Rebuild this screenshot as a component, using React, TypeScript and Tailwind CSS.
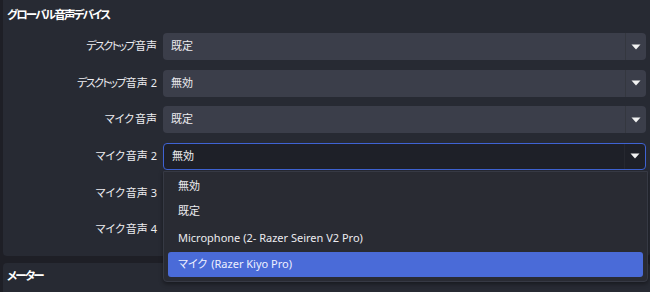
const font = {
  fontFamily: '"Noto Sans", "Noto Sans CJK JP", sans-serif',
};

function Arrow() {
  return (
    <svg width="10" height="6" viewBox="0 0 10 6" className="shrink-0">
      <path d="M0.5 0.5 H9.5 L5 5.5 Z" fill="#f2f2f2" />
    </svg>
  );
}

function Combo({ value, focused }: { value: string; focused?: boolean }) {
  return (
    <div
      className={`flex h-[27px] flex-1 items-center rounded-[4px] ${
        focused ? "border border-[#3f63d4] bg-[#1e2028]" : "bg-[#3b3e4a]"
      }`}
    >
      <span className="flex-1 pl-[8px] text-[#ececf0]">{value}</span>
      <div
        className={`flex h-full w-[21px] items-center justify-center border-l ${
          focused ? "border-[#262830]" : "border-[#34373f]"
        }`}
      >
        <Arrow />
      </div>
    </div>
  );
}

const rows = [
  { kana: "デスクトップ", rest: "音声", value: "既定" },
  { kana: "デスクトップ", rest: "音声 2", value: "無効" },
  { kana: "マイク", rest: "音声", value: "既定" },
  { kana: "マイク", rest: "音声 2", value: "無効", focused: true },
  { kana: "マイク", rest: "音声 3", value: null },
  { kana: "マイク", rest: "音声 4", value: null },
];

export default function App() {
  return (
    <div
      className="relative h-[292px] w-[650px] overflow-hidden bg-[#1e1f26] pl-[3px] text-[11px] [font-feature-settings:'palt']"
      style={font}
    >
      <div className="h-[256px] rounded-b-[4px] bg-[#272a33] pr-[4px]">
        <div className="flex h-[30px] items-center pl-[4px] text-[11.5px] font-semibold tracking-[-1.8px] text-white">
          グローバル音声デバイス
        </div>
        <div className="mt-[3px] flex flex-col gap-[9.6px]">
          {rows.map((r, i) => (
            <div key={i} className="flex h-[27px] items-center gap-[6px]">
              <div className="w-[154px] text-right text-[#ececf0]">
                <span className={r.kana === "デスクトップ" ? "tracking-[-1.6px]" : ""}>
                  {r.kana}
                </span>
                <span className="ml-[1px]">{r.rest}</span>
              </div>
              {r.value && <Combo value={r.value} focused={r.focused} />}
            </div>
          ))}
        </div>
      </div>

      <div className="mt-[7px] h-[40px] rounded-t-[4px] bg-[#272a33]">
        <div className="flex h-[26px] items-center pl-[4px] text-[11.5px] font-semibold tracking-[-1.8px] text-white">
          メーター
        </div>
      </div>

      {/* open dropdown list */}
      <div className="absolute left-[163px] top-[171px] w-[485px] rounded-b-[4px] border border-[#363944] bg-[#292b33] px-[4px] pb-[4px] pt-[2px] text-[#ececf0] shadow-[0_2px_4px_rgba(0,0,0,0.4)]">
        <div className="flex h-[25px] items-center pl-[10px]">無効</div>
        <div className="flex h-[25px] items-center pl-[10px]">既定</div>
        <div className="flex h-[28px] items-center pl-[10px]">
          Microphone (2- Razer Seiren V2 Pro)
        </div>
        <div className="flex h-[25px] items-center rounded-[3px] bg-[#4a6bd8] pl-[10px] text-[#eef0ff]">
          <span>マイク</span>
          <span className="ml-[4px]">(Razer Kiyo Pro)</span>
        </div>
      </div>
    </div>
  );
}
